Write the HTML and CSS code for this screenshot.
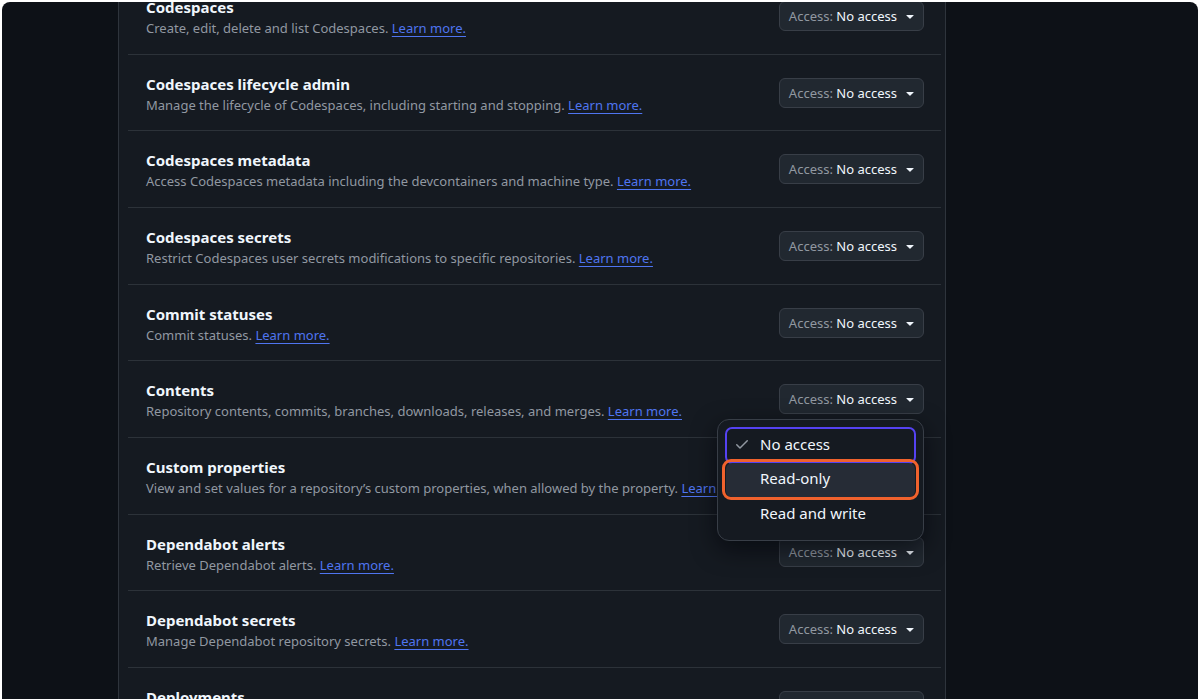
FILE: index.html
```html
<!DOCTYPE html>
<html lang="en">
<head>
<meta charset="utf-8">
<title>Repository permissions</title>
<link rel="stylesheet" href="styles.css">
</head>
<body>
<div class="frame">
  <div class="panel">
    <ul class="list">
      <li class="row">
        <div class="info"><div class="title">Codespaces</div><div class="desc">Create, edit, delete and list Codespaces. <a href="#">Learn more.</a></div></div>
        <div class="control"><button class="btn"><span class="lbl">Access:</span>&nbsp;No access<svg class="caret" viewBox="0 0 16 16" width="16" height="16"><path d="m4.427 7.427 3.396 3.396a.25.25 0 0 0 .354 0l3.396-3.396A.25.25 0 0 0 11.396 7H4.604a.25.25 0 0 0-.177.427Z"/></svg></button></div>
      </li>
      <li class="row">
        <div class="info"><div class="title">Codespaces lifecycle admin</div><div class="desc">Manage the lifecycle of Codespaces, including starting and stopping. <a href="#">Learn more.</a></div></div>
        <div class="control"><button class="btn"><span class="lbl">Access:</span>&nbsp;No access<svg class="caret" viewBox="0 0 16 16" width="16" height="16"><path d="m4.427 7.427 3.396 3.396a.25.25 0 0 0 .354 0l3.396-3.396A.25.25 0 0 0 11.396 7H4.604a.25.25 0 0 0-.177.427Z"/></svg></button></div>
      </li>
      <li class="row">
        <div class="info"><div class="title">Codespaces metadata</div><div class="desc">Access Codespaces metadata including the devcontainers and machine type. <a href="#">Learn more.</a></div></div>
        <div class="control"><button class="btn"><span class="lbl">Access:</span>&nbsp;No access<svg class="caret" viewBox="0 0 16 16" width="16" height="16"><path d="m4.427 7.427 3.396 3.396a.25.25 0 0 0 .354 0l3.396-3.396A.25.25 0 0 0 11.396 7H4.604a.25.25 0 0 0-.177.427Z"/></svg></button></div>
      </li>
      <li class="row">
        <div class="info"><div class="title">Codespaces secrets</div><div class="desc">Restrict Codespaces user secrets modifications to specific repositories. <a href="#">Learn more.</a></div></div>
        <div class="control"><button class="btn"><span class="lbl">Access:</span>&nbsp;No access<svg class="caret" viewBox="0 0 16 16" width="16" height="16"><path d="m4.427 7.427 3.396 3.396a.25.25 0 0 0 .354 0l3.396-3.396A.25.25 0 0 0 11.396 7H4.604a.25.25 0 0 0-.177.427Z"/></svg></button></div>
      </li>
      <li class="row">
        <div class="info"><div class="title">Commit statuses</div><div class="desc">Commit statuses. <a href="#">Learn more.</a></div></div>
        <div class="control"><button class="btn"><span class="lbl">Access:</span>&nbsp;No access<svg class="caret" viewBox="0 0 16 16" width="16" height="16"><path d="m4.427 7.427 3.396 3.396a.25.25 0 0 0 .354 0l3.396-3.396A.25.25 0 0 0 11.396 7H4.604a.25.25 0 0 0-.177.427Z"/></svg></button></div>
      </li>
      <li class="row">
        <div class="info"><div class="title">Contents</div><div class="desc">Repository contents, commits, branches, downloads, releases, and merges. <a href="#">Learn more.</a></div></div>
        <div class="control open"><button class="btn"><span class="lbl">Access:</span>&nbsp;No access<svg class="caret" viewBox="0 0 16 16" width="16" height="16"><path d="m4.427 7.427 3.396 3.396a.25.25 0 0 0 .354 0l3.396-3.396A.25.25 0 0 0 11.396 7H4.604a.25.25 0 0 0-.177.427Z"/></svg></button>
          <ul class="menu">
            <li class="item focused"><svg class="check" viewBox="0 0 16 16" width="16" height="16"><path d="M13.78 4.22a.75.75 0 0 1 0 1.06l-7.25 7.25a.75.75 0 0 1-1.06 0L2.22 9.28a.751.751 0 0 1 .018-1.042.751.751 0 0 1 1.042-.018L6 10.94l6.72-6.72a.75.75 0 0 1 1.06 0Z"/></svg><span>No access</span></li>
            <li class="item hover"><span class="spacer"></span><span>Read-only</span></li>
            <li class="item"><span class="spacer"></span><span>Read and write</span></li>
          </ul>
        </div>
      </li>
      <li class="row">
        <div class="info"><div class="title">Custom properties</div><div class="desc">View and set values for a repository’s custom properties, when allowed by the property. <a href="#">Learn more.</a></div></div>
        <div class="control"><button class="btn"><span class="lbl">Access:</span>&nbsp;No access<svg class="caret" viewBox="0 0 16 16" width="16" height="16"><path d="m4.427 7.427 3.396 3.396a.25.25 0 0 0 .354 0l3.396-3.396A.25.25 0 0 0 11.396 7H4.604a.25.25 0 0 0-.177.427Z"/></svg></button></div>
      </li>
      <li class="row">
        <div class="info"><div class="title">Dependabot alerts</div><div class="desc">Retrieve Dependabot alerts. <a href="#">Learn more.</a></div></div>
        <div class="control"><button class="btn"><span class="lbl">Access:</span>&nbsp;No access<svg class="caret" viewBox="0 0 16 16" width="16" height="16"><path d="m4.427 7.427 3.396 3.396a.25.25 0 0 0 .354 0l3.396-3.396A.25.25 0 0 0 11.396 7H4.604a.25.25 0 0 0-.177.427Z"/></svg></button></div>
      </li>
      <li class="row">
        <div class="info"><div class="title">Dependabot secrets</div><div class="desc">Manage Dependabot repository secrets. <a href="#">Learn more.</a></div></div>
        <div class="control"><button class="btn"><span class="lbl">Access:</span>&nbsp;No access<svg class="caret" viewBox="0 0 16 16" width="16" height="16"><path d="m4.427 7.427 3.396 3.396a.25.25 0 0 0 .354 0l3.396-3.396A.25.25 0 0 0 11.396 7H4.604a.25.25 0 0 0-.177.427Z"/></svg></button></div>
      </li>
      <li class="row">
        <div class="info"><div class="title">Deployments</div><div class="desc">Deployments and deployment statuses. <a href="#">Learn more.</a></div></div>
        <div class="control"><button class="btn"><span class="lbl">Access:</span>&nbsp;No access<svg class="caret" viewBox="0 0 16 16" width="16" height="16"><path d="m4.427 7.427 3.396 3.396a.25.25 0 0 0 .354 0l3.396-3.396A.25.25 0 0 0 11.396 7H4.604a.25.25 0 0 0-.177.427Z"/></svg></button></div>
      </li>
    </ul>
  </div>
</div>
</body>
</html>
```
FILE: styles.css
```css
* { box-sizing: border-box; }
html, body { margin: 0; padding: 0; }
body {
  background: #ffffff;
  font-family: "Noto Sans", "Liberation Sans", sans-serif;
  overflow: hidden;
  height: 699px;
}
.frame {
  margin: 2px 2px 0;
  height: 697px;
  background: #0d1117;
  border-radius: 8px 8px 0 0;
  overflow: hidden;
  display: flex;
}
.panel {
  margin-left: 116px;
  width: 828px;
  height: 100%;
  background: #151a21;
  border-left: 1px solid #2e343c;
  border-right: 1px solid #2e343c;
}
.list {
  list-style: none;
  margin: -23.8px 4px 0 9px;
  padding: 0;
}
.row {
  height: 76.625px;
  border-bottom: 1px solid #2c3239;
  display: flex;
  align-items: center;
  justify-content: space-between;
  padding: 0 18px 0 18px;
}
.info {
  align-self: flex-start;
  padding-top: 18px;
}
.title {
  font-size: 15px;
  line-height: 22px;
  font-weight: 700;
  color: #f0f6fc;
}
.desc {
  font-size: 13px;
  line-height: 20px;
  color: #9198a1;
}
.desc a {
  color: #4f75f0;
  text-decoration: underline;
  text-underline-offset: 3px;
}
.control {
  position: relative;
  margin-right: -1px;
}
.btn {
  display: flex;
  align-items: center;
  height: 30px;
  padding: 0 5px 0 9px;
  background: #212830;
  border: 1px solid #383e47;
  border-radius: 6px;
  font-family: inherit;
  font-size: 13px;
  color: #f0f6fc;
  white-space: nowrap;
}
.btn .lbl { color: #9198a1; }
.caret {
  fill: #f0f6fc;
  margin-left: 5px;
  flex: none;
}
.menu {
  position: absolute;
  top: calc(100% + 5px);
  right: 0;
  width: 207px;
  list-style: none;
  margin: 0;
  padding: 8px;
  background: #151a21;
  border: 1px solid #383e47;
  border-radius: 12px;
  z-index: 5;
  box-shadow: 0 8px 24px rgba(1, 4, 9, 0.6);
}
.item {
  position: relative;
  display: flex;
  align-items: center;
  gap: 10px;
  height: 34.5px;
  padding: 0 8px 3px;
  border-radius: 6px;
  font-size: 15px;
  color: #f0f6fc;
}
.item .spacer { width: 16px; height: 16px; flex: none; }
.check { fill: #9198a1; flex: none; }
.item.focused {
  outline: 2px solid #5542f2;
  outline-offset: -1px;
}
.item.hover {
  background: #262c36;
}
.item.hover::after {
  content: "";
  position: absolute;
  top: -4px;
  bottom: -3px;
  left: -4px;
  right: -4px;
  border: 3px solid #f0622d;
  border-radius: 9px;
}
```
